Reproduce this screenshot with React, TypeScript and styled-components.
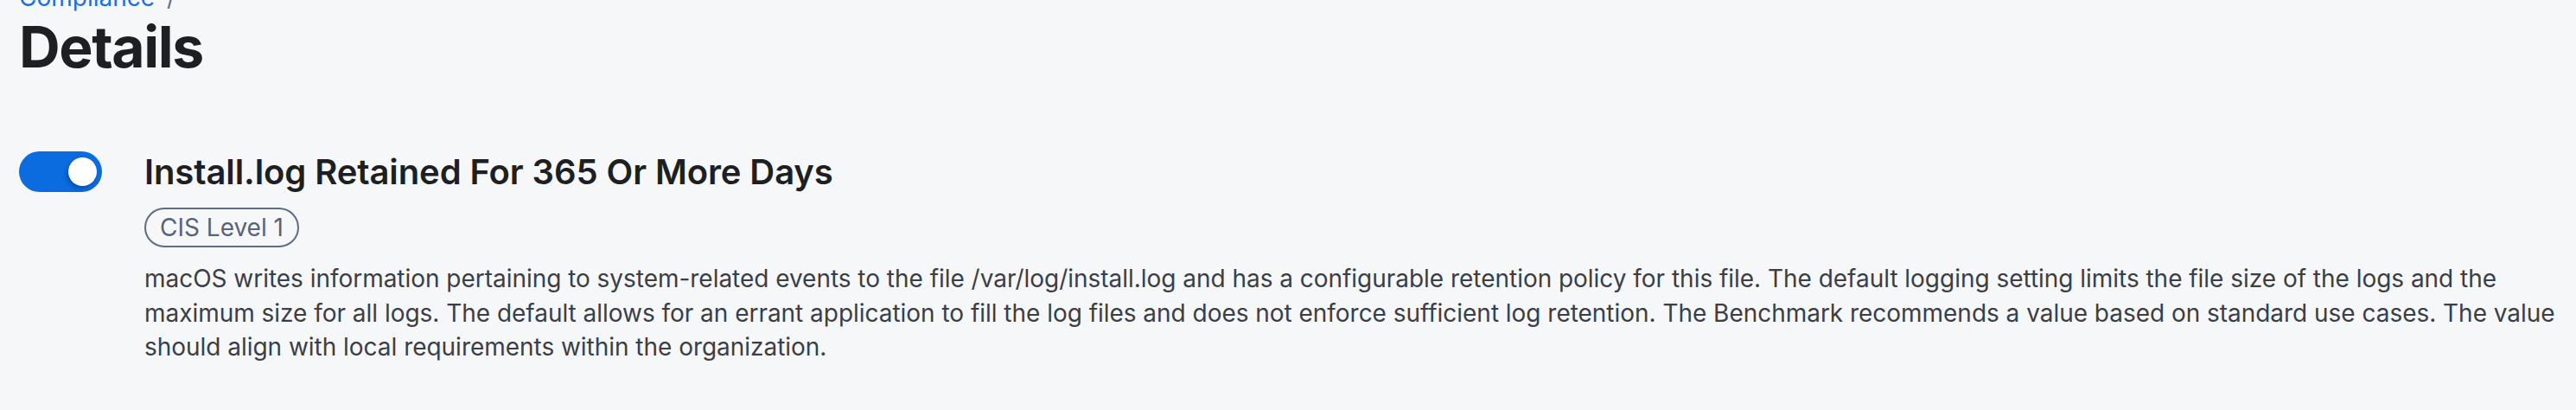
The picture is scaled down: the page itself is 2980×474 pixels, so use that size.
import * as React from 'react'
import styled, { createGlobalStyle } from 'styled-components'

const GlobalStyle = createGlobalStyle`
  html, body {
    margin: 0;
    padding: 0;
    background: #f6f7f9;
    overflow: hidden;
  }
  body {
    font-family: Inter, 'Noto Sans', 'Liberation Sans', sans-serif;
    color: #1e1f22;
  }
`

const Page = styled.div`
  padding: 0 4px 0 22px;
  min-height: 474px;
  box-sizing: border-box;
`

const Breadcrumb = styled.nav`
  display: flex;
  align-items: baseline;
  gap: 14px;
  margin-top: -23px;
  font-size: 28px;
  line-height: 40px;
`

const Crumb = styled.a`
  color: #1a6fe0;
  text-decoration: none;
`

const Separator = styled.span`
  color: #6b7280;
`

const PageTitle = styled.h1`
  margin: -2px 0 0;
  font-size: 66px;
  line-height: 79px;
  font-weight: 700;
  letter-spacing: -1.4px;
  color: #1e1f22;
`

const RuleRow = styled.section`
  display: flex;
  align-items: flex-start;
  gap: 49px;
  margin-top: 81px;
`

const ToggleTrack = styled.button<{ on?: boolean }>`
  flex: none;
  display: flex;
  align-items: center;
  justify-content: ${({ on }) => (on ? 'flex-end' : 'flex-start')};
  width: 96px;
  height: 47px;
  padding: 0 6px;
  border: none;
  border-radius: 24px;
  background: ${({ on }) => (on ? '#0b6ce0' : '#c4c9d2')};
  box-sizing: border-box;
  cursor: pointer;
`

const ToggleKnob = styled.span`
  width: 33px;
  height: 33px;
  border-radius: 50%;
  background: #ffffff;
  box-shadow: -2px 3px 5px rgba(0, 30, 80, 0.35);
`

const RuleBody = styled.div`
  flex: 1;
  min-width: 0;
`

const RuleTitle = styled.h2`
  margin: 0;
  font-size: 40px;
  line-height: 48px;
  font-weight: 600;
  letter-spacing: -0.1px;
  color: #1e1f22;
`

const Badge = styled.span`
  display: inline-block;
  margin-top: 17px;
  padding: 0 16px;
  border: 2px solid #5e6c86;
  border-radius: 24px;
  font-size: 28px;
  line-height: 42px;
  color: #56637a;
`

const Description = styled.p`
  margin: 17px 0 0;
  font-size: 28px;
  line-height: 39.5px;
  letter-spacing: -0.03px;
  color: #3b3e45;
`

const Toggle: React.FC<{ on?: boolean }> = ({ on }) => (
  <ToggleTrack on={on} aria-pressed={on}>
    <ToggleKnob />
  </ToggleTrack>
)

const App: React.FC = () => {
  return (
    <Page>
      <GlobalStyle />
      <Breadcrumb>
        <Crumb href="#">Compliance</Crumb>
        <Separator>/</Separator>
      </Breadcrumb>
      <PageTitle>Details</PageTitle>
      <RuleRow>
        <Toggle on />
        <RuleBody>
          <RuleTitle>Install.log Retained For 365 Or More Days</RuleTitle>
          <Badge>CIS Level 1</Badge>
          <Description>
            macOS writes information pertaining to system-related events to the file
            /var/log/install.log and has a configurable retention policy for this file. The
            default logging setting limits the file size of the logs and the maximum size for
            all logs. The default allows for an errant application to fill the log files and
            does not enforce sufficient log retention. The Benchmark recommends a value based
            on standard use cases. The value should align with local requirements within the
            organization.
          </Description>
        </RuleBody>
      </RuleRow>
    </Page>
  )
}

export default App
